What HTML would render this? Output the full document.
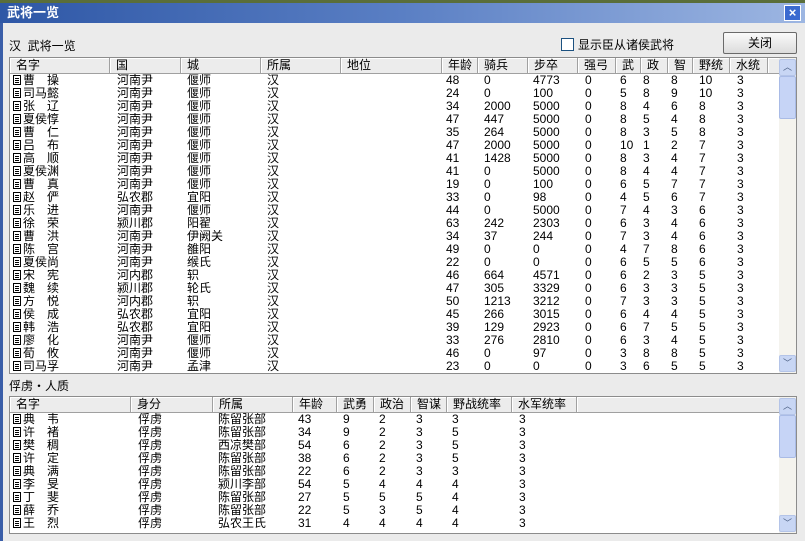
<!DOCTYPE html>
<html><head><meta charset="utf-8"><style>
*{margin:0;padding:0;box-sizing:border-box}
body{width:805px;height:541px;overflow:hidden;background:#ebebeb;font-family:"Liberation Sans","Noto Sans CJK SC","WenQuanYi Zen Hei",sans-serif;font-size:12px;color:#000;position:relative}
.abs{position:absolute}
#top{left:0;top:0;width:805px;height:3px;background:#5a6e3a}
#title{left:0;top:3px;width:805px;height:20px;background:linear-gradient(to right,#2e57a6,#5a7fc4 50%,#9db6e2);color:#fff;font-weight:bold;font-size:13px;line-height:20px;padding-left:7px}
#xbtn{left:784px;top:5px;width:17px;height:16px;background:#3a6ad0;border:1px solid #fff;color:#fff;font-weight:bold;font-size:13px;line-height:13px;text-align:center}
#lb{left:0;top:23px;width:3px;height:518px;background:#3a5ea8}
.list{background:#fff;border:1px solid #8c8c8c;overflow:hidden}
.hdr{position:absolute;top:0;height:16px;background:#ececec;border-right:1px solid #a0a0a0;border-bottom:1px solid #a0a0a0;box-shadow:inset 1px 1px 0 #fff;padding-left:6px;line-height:15px}
table{border-collapse:collapse;table-layout:fixed;position:absolute}
td{height:13px;line-height:13px;padding:0;white-space:nowrap;overflow:hidden}
.ic{display:inline-block;width:8px;height:10px;border:1px solid #000;background:#fff;vertical-align:-1px;margin-right:2px;background-image:linear-gradient(#000,#000),linear-gradient(#000,#000),linear-gradient(#000,#000);background-size:4px 1px;background-repeat:no-repeat;background-position:1px 2px,1px 4px,1px 6px}
.sb{position:absolute;width:17px;background:#f4f3ee}
.sbb{position:absolute;left:0;width:17px;height:17px;background:#c8d6f4;border:1px solid #b4c4e8;border-radius:2px;color:#4d6185;font-size:9px;text-align:center;line-height:15px}
.th{position:absolute;left:0;width:17px;background:#c6d4f6;border:1px solid #a9bbe6;border-radius:2px}
</style></head><body>
<div id="top" class="abs"></div>
<div id="title" class="abs">武将一览</div>
<div id="xbtn" class="abs">×</div>
<div id="lb" class="abs"></div>
<div class="abs" style="left:9px;top:37px">汉&nbsp;&nbsp;武将一览</div>
<div class="abs" style="left:561px;top:38px;width:13px;height:13px;background:#fff;border:1px solid #1c5180"></div>
<div class="abs" style="left:578px;top:36px">显示臣从诸侯武将</div>
<div class="abs" style="left:723px;top:32px;width:74px;height:22px;background:linear-gradient(#fafafa,#dcdcdc);border:1px solid #6a6a6a;border-radius:2px;text-align:center;line-height:20px">关闭</div>

<div class="abs list" style="left:9px;top:57px;width:788px;height:317px">
<div class="hdr" style="left:0;width:100px">名字</div>
<div class="hdr" style="left:100px;width:71px">国</div>
<div class="hdr" style="left:171px;width:80px">城</div>
<div class="hdr" style="left:251px;width:80px">所属</div>
<div class="hdr" style="left:331px;width:101px">地位</div>
<div class="hdr" style="left:432px;width:36px">年龄</div>
<div class="hdr" style="left:468px;width:50px">骑兵</div>
<div class="hdr" style="left:518px;width:50px">步卒</div>
<div class="hdr" style="left:568px;width:38px">强弓</div>
<div class="hdr" style="left:606px;width:25px">武</div>
<div class="hdr" style="left:631px;width:27px">政</div>
<div class="hdr" style="left:658px;width:25px">智</div>
<div class="hdr" style="left:683px;width:37px">野统</div>
<div class="hdr" style="left:720px;width:38px">水统</div>
<div class="hdr" style="left:758px;width:12px"></div>
<table style="left:3px;top:16px">
<colgroup><col style="width:104px"><col style="width:70px"><col style="width:80px"><col style="width:179px"><col style="width:38px"><col style="width:49px"><col style="width:52px"><col style="width:35px"><col style="width:23px"><col style="width:28px"><col style="width:28px"><col style="width:38px"><col style="width:20px"></colgroup>
<tr><td><span class="ic"></span>曹　操</td><td>河南尹</td><td>偃师</td><td>汉</td><td>48</td><td>0</td><td>4773</td><td>0</td><td>6</td><td>8</td><td>8</td><td>10</td><td>3</td></tr>
<tr><td><span class="ic"></span>司马懿</td><td>河南尹</td><td>偃师</td><td>汉</td><td>24</td><td>0</td><td>100</td><td>0</td><td>5</td><td>8</td><td>9</td><td>10</td><td>3</td></tr>
<tr><td><span class="ic"></span>张　辽</td><td>河南尹</td><td>偃师</td><td>汉</td><td>34</td><td>2000</td><td>5000</td><td>0</td><td>8</td><td>4</td><td>6</td><td>8</td><td>3</td></tr>
<tr><td><span class="ic"></span>夏侯惇</td><td>河南尹</td><td>偃师</td><td>汉</td><td>47</td><td>447</td><td>5000</td><td>0</td><td>8</td><td>5</td><td>4</td><td>8</td><td>3</td></tr>
<tr><td><span class="ic"></span>曹　仁</td><td>河南尹</td><td>偃师</td><td>汉</td><td>35</td><td>264</td><td>5000</td><td>0</td><td>8</td><td>3</td><td>5</td><td>8</td><td>3</td></tr>
<tr><td><span class="ic"></span>吕　布</td><td>河南尹</td><td>偃师</td><td>汉</td><td>47</td><td>2000</td><td>5000</td><td>0</td><td>10</td><td>1</td><td>2</td><td>7</td><td>3</td></tr>
<tr><td><span class="ic"></span>高　顺</td><td>河南尹</td><td>偃师</td><td>汉</td><td>41</td><td>1428</td><td>5000</td><td>0</td><td>8</td><td>3</td><td>4</td><td>7</td><td>3</td></tr>
<tr><td><span class="ic"></span>夏侯渊</td><td>河南尹</td><td>偃师</td><td>汉</td><td>41</td><td>0</td><td>5000</td><td>0</td><td>8</td><td>4</td><td>4</td><td>7</td><td>3</td></tr>
<tr><td><span class="ic"></span>曹　真</td><td>河南尹</td><td>偃师</td><td>汉</td><td>19</td><td>0</td><td>100</td><td>0</td><td>6</td><td>5</td><td>7</td><td>7</td><td>3</td></tr>
<tr><td><span class="ic"></span>赵　俨</td><td>弘农郡</td><td>宜阳</td><td>汉</td><td>33</td><td>0</td><td>98</td><td>0</td><td>4</td><td>5</td><td>6</td><td>7</td><td>3</td></tr>
<tr><td><span class="ic"></span>乐　进</td><td>河南尹</td><td>偃师</td><td>汉</td><td>44</td><td>0</td><td>5000</td><td>0</td><td>7</td><td>4</td><td>3</td><td>6</td><td>3</td></tr>
<tr><td><span class="ic"></span>徐　荣</td><td>颍川郡</td><td>阳翟</td><td>汉</td><td>63</td><td>242</td><td>2303</td><td>0</td><td>6</td><td>3</td><td>4</td><td>6</td><td>3</td></tr>
<tr><td><span class="ic"></span>曹　洪</td><td>河南尹</td><td>伊阙关</td><td>汉</td><td>34</td><td>37</td><td>244</td><td>0</td><td>7</td><td>3</td><td>4</td><td>6</td><td>3</td></tr>
<tr><td><span class="ic"></span>陈　宫</td><td>河南尹</td><td>雒阳</td><td>汉</td><td>49</td><td>0</td><td>0</td><td>0</td><td>4</td><td>7</td><td>8</td><td>6</td><td>3</td></tr>
<tr><td><span class="ic"></span>夏侯尚</td><td>河南尹</td><td>缑氏</td><td>汉</td><td>22</td><td>0</td><td>0</td><td>0</td><td>6</td><td>5</td><td>5</td><td>6</td><td>3</td></tr>
<tr><td><span class="ic"></span>宋　宪</td><td>河内郡</td><td>轵</td><td>汉</td><td>46</td><td>664</td><td>4571</td><td>0</td><td>6</td><td>2</td><td>3</td><td>5</td><td>3</td></tr>
<tr><td><span class="ic"></span>魏　续</td><td>颍川郡</td><td>轮氏</td><td>汉</td><td>47</td><td>305</td><td>3329</td><td>0</td><td>6</td><td>3</td><td>3</td><td>5</td><td>3</td></tr>
<tr><td><span class="ic"></span>方　悦</td><td>河内郡</td><td>轵</td><td>汉</td><td>50</td><td>1213</td><td>3212</td><td>0</td><td>7</td><td>3</td><td>3</td><td>5</td><td>3</td></tr>
<tr><td><span class="ic"></span>侯　成</td><td>弘农郡</td><td>宜阳</td><td>汉</td><td>45</td><td>266</td><td>3015</td><td>0</td><td>6</td><td>4</td><td>4</td><td>5</td><td>3</td></tr>
<tr><td><span class="ic"></span>韩　浩</td><td>弘农郡</td><td>宜阳</td><td>汉</td><td>39</td><td>129</td><td>2923</td><td>0</td><td>6</td><td>7</td><td>5</td><td>5</td><td>3</td></tr>
<tr><td><span class="ic"></span>廖　化</td><td>河南尹</td><td>偃师</td><td>汉</td><td>33</td><td>276</td><td>2810</td><td>0</td><td>6</td><td>3</td><td>4</td><td>5</td><td>3</td></tr>
<tr><td><span class="ic"></span>荀　攸</td><td>河南尹</td><td>偃师</td><td>汉</td><td>46</td><td>0</td><td>97</td><td>0</td><td>3</td><td>8</td><td>8</td><td>5</td><td>3</td></tr>
<tr><td><span class="ic"></span>司马孚</td><td>河南尹</td><td>孟津</td><td>汉</td><td>23</td><td>0</td><td>0</td><td>0</td><td>3</td><td>6</td><td>5</td><td>5</td><td>3</td></tr>
</table>
<div class="sb" style="left:769px;top:0;height:315px">
<div class="sbb" style="top:1px">︿</div>
<div class="th" style="top:18px;height:43px"></div>
<div class="sbb" style="top:297px">﹀</div>
</div>
</div>

<div class="abs" style="left:9px;top:377px">俘虏・人质</div>

<div class="abs list" style="left:9px;top:396px;width:788px;height:138px">
<div class="hdr" style="left:0;width:121px">名字</div>
<div class="hdr" style="left:121px;width:82px">身分</div>
<div class="hdr" style="left:203px;width:80px">所属</div>
<div class="hdr" style="left:283px;width:44px">年龄</div>
<div class="hdr" style="left:327px;width:37px">武勇</div>
<div class="hdr" style="left:364px;width:37px">政治</div>
<div class="hdr" style="left:401px;width:36px">智谋</div>
<div class="hdr" style="left:437px;width:65px">野战统率</div>
<div class="hdr" style="left:502px;width:65px">水军统率</div>
<div class="hdr" style="left:567px;width:203px;border-right:none"></div>
<table style="left:3px;top:16px">
<colgroup><col style="width:125px"><col style="width:80px"><col style="width:80px"><col style="width:45px"><col style="width:36px"><col style="width:37px"><col style="width:36px"><col style="width:67px"><col style="width:30px"></colgroup>
<tr><td><span class="ic"></span>典　韦</td><td>俘虏</td><td>陈留张部</td><td>43</td><td>9</td><td>2</td><td>3</td><td>3</td><td>3</td></tr>
<tr><td><span class="ic"></span>许　褚</td><td>俘虏</td><td>陈留张部</td><td>34</td><td>9</td><td>2</td><td>3</td><td>5</td><td>3</td></tr>
<tr><td><span class="ic"></span>樊　稠</td><td>俘虏</td><td>西凉樊部</td><td>54</td><td>6</td><td>2</td><td>3</td><td>5</td><td>3</td></tr>
<tr><td><span class="ic"></span>许　定</td><td>俘虏</td><td>陈留张部</td><td>38</td><td>6</td><td>2</td><td>3</td><td>5</td><td>3</td></tr>
<tr><td><span class="ic"></span>典　满</td><td>俘虏</td><td>陈留张部</td><td>22</td><td>6</td><td>2</td><td>3</td><td>3</td><td>3</td></tr>
<tr><td><span class="ic"></span>李　旻</td><td>俘虏</td><td>颍川李部</td><td>54</td><td>5</td><td>4</td><td>4</td><td>4</td><td>3</td></tr>
<tr><td><span class="ic"></span>丁　斐</td><td>俘虏</td><td>陈留张部</td><td>27</td><td>5</td><td>5</td><td>5</td><td>4</td><td>3</td></tr>
<tr><td><span class="ic"></span>薛　乔</td><td>俘虏</td><td>陈留张部</td><td>22</td><td>5</td><td>3</td><td>5</td><td>4</td><td>3</td></tr>
<tr><td><span class="ic"></span>王　烈</td><td>俘虏</td><td>弘农王氏</td><td>31</td><td>4</td><td>4</td><td>4</td><td>4</td><td>3</td></tr>
</table>
<div class="sb" style="left:769px;top:0;height:136px">
<div class="sbb" style="top:1px">︿</div>
<div class="th" style="top:18px;height:43px"></div>
<div class="sbb" style="top:118px">﹀</div>
</div>
</div>
</body></html>
